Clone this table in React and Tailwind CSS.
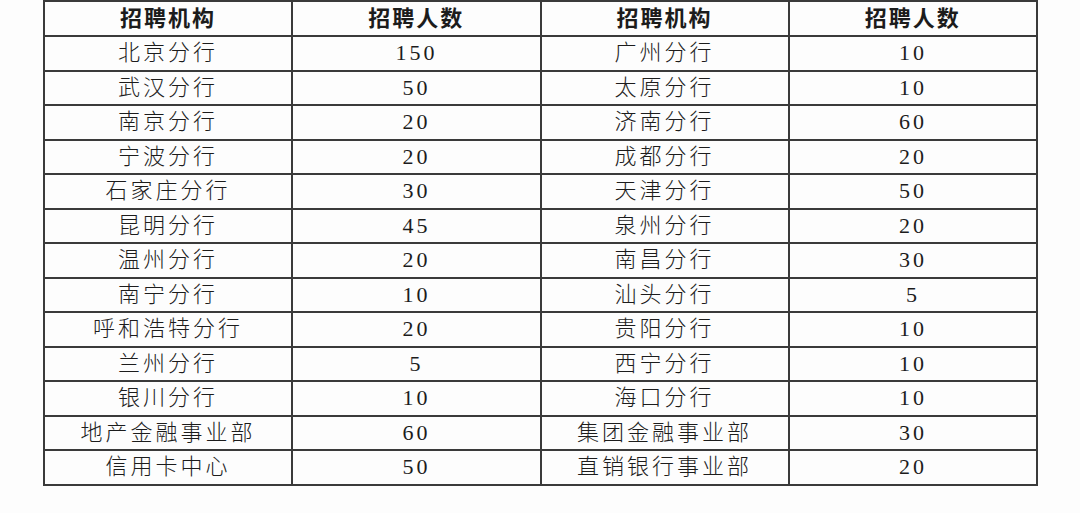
import React from "react";

const rows = [
  ["北京分行", "150", "广州分行", "10"],
  ["武汉分行", "50", "太原分行", "10"],
  ["南京分行", "20", "济南分行", "60"],
  ["宁波分行", "20", "成都分行", "20"],
  ["石家庄分行", "30", "天津分行", "50"],
  ["昆明分行", "45", "泉州分行", "20"],
  ["温州分行", "20", "南昌分行", "30"],
  ["南宁分行", "10", "汕头分行", "5"],
  ["呼和浩特分行", "20", "贵阳分行", "10"],
  ["兰州分行", "5", "西宁分行", "10"],
  ["银川分行", "10", "海口分行", "10"],
  ["地产金融事业部", "60", "集团金融事业部", "30"],
  ["信用卡中心", "50", "直销银行事业部", "20"],
];

const head = ["招聘机构", "招聘人数", "招聘机构", "招聘人数"];

export default function App() {
  return (
    <div
      className="w-[1080px] h-[513px] bg-[#fdfdfd] text-[#1c1c1c] overflow-hidden"
      style={{ fontFamily: '"Liberation Serif", "Noto Sans CJK SC", serif' }}
    >
      <table className="ml-[43px] w-[995px] table-fixed border-collapse">
        <thead>
          <tr>
            {head.map((h, i) => (
              <th
                key={i}
                className="h-[35px] border-2 border-[#3a3a3a] text-[22px] font-bold tracking-[2px] leading-none text-center"
              >
                {h}
              </th>
            ))}
          </tr>
        </thead>
        <tbody>
          {rows.map((r, i) => (
            <tr key={i}>
              {r.map((c, j) => (
                <td
                  key={j}
                  className="h-[34.5px] border-2 border-[#3a3a3a] text-[22px] font-light tracking-[3px] leading-none text-center"
                >
                  {c}
                </td>
              ))}
            </tr>
          ))}
        </tbody>
      </table>
    </div>
  );
}
